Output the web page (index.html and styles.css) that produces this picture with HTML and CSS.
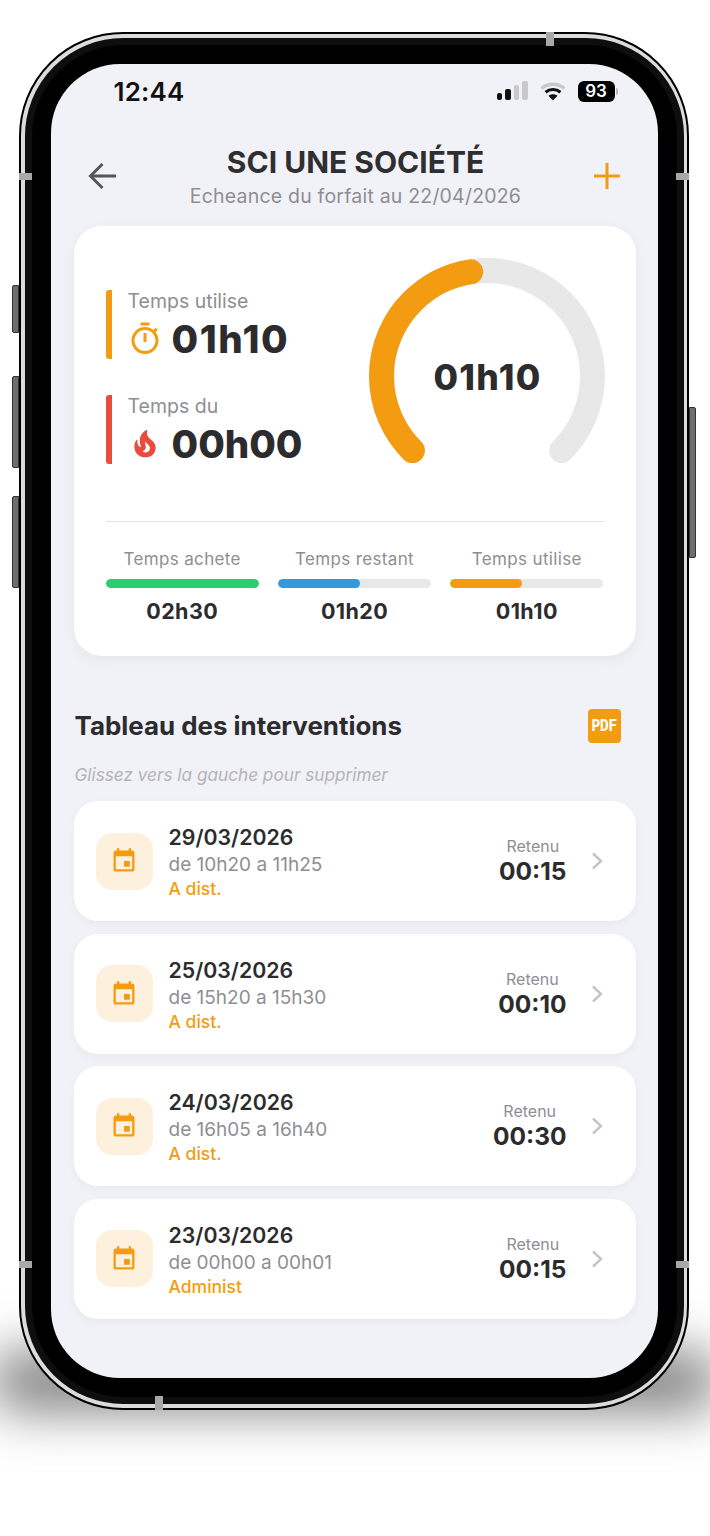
FILE: index.html
```html
<!doctype html>
<html lang="fr">
 <head>
	<meta charset="UTF-8">
	<title>SCI UNE SOCIÉTÉ</title>
	<link rel="stylesheet" href="styles.css">
 </head>
 <body>
	<div class="floor_shadow"></div>
	<div class="phone">
		<i class="side_btn btn_a"></i>
		<i class="side_btn btn_b"></i>
		<i class="side_btn btn_c"></i>
		<i class="side_btn btn_d"></i>
		<i class="band band_top"></i>
		<i class="band band_bottom"></i>
		<i class="band band_l1"></i>
		<i class="band band_r1"></i>
		<i class="band band_l2"></i>
		<i class="band band_r2"></i>
		<div class="ring">
			<div class="bezel">
				<div class="screen">
					<!-- barre de statut -->
					<div class="status">
						<span class="clock">12:44</span>
						<div class="status_icons">
							<div class="signal"><i class="on s1"></i><i class="on s2"></i><i class="s3"></i><i class="s4"></i></div>
							<svg class="wifi" width="26" height="19" viewBox="0 0 26 19">
								<path d="M1.5 6.5C7.8 .8 18.2 .8 24.5 6.5" fill="none" stroke="#c9c9cc" stroke-width="3.4"/>
								<path d="M5.6 10.2c4.2-3.6 10.6-3.6 14.8 0" fill="none" stroke="#111" stroke-width="3.2"/>
								<path d="M13 18.5l-4.5-4.8c2.6-2 6.4-2 9 0z" fill="#111"/>
							</svg>
							<div class="battery"><span class="batt_body">93</span><i class="batt_tip"></i></div>
						</div>
					</div>
					<!-- en-tete -->
					<header class="top">
						<svg class="top_icon" width="30" height="28" viewBox="0 0 30 28">
							<path d="M28 14H3M14.500 2L2.500 14l12 12" fill="none" stroke="#555558" stroke-width="3"/>
						</svg>
						<div class="top_text">
							<h1>SCI UNE SOCIÉTÉ</h1>
							<p>Echeance du forfait au 22/04/2026</p>
						</div>
						<svg class="top_icon" width="28" height="28" viewBox="0 0 28 28">
							<path d="M14 1v26M1 14h26" fill="none" stroke="#f39c12" stroke-width="3"/>
						</svg>
					</header>
					<!-- carte des temps -->
					<section class="card">
						<div class="card_top">
							<div class="stats">
								<div class="stat stat_used">
									<div class="stat_label">Temps utilise</div>
									<div class="stat_value">
										<svg class="stat_icon" width="36" height="36" viewBox="0 0 24 24"><path fill="#f39c12" d="M15 1H9v2h6V1zm-4 13h2V8h-2v6zm8.030-6.610l1.420-1.420c-.43-.51-.9-.99-1.410-1.410l-1.420 1.420C16.070 4.740 14.120 4 12 4c-4.970 0-9 4.030-9 9s4.020 9 9 9 9-4.030 9-9c0-2.120-.74-4.070-1.970-5.610zM12 20c-3.870 0-7-3.130-7-7s3.130-7 7-7 7 3.130 7 7-3.130 7-7 7z"/></svg>
										01h10
									</div>
								</div>
								<div class="stat stat_due">
									<div class="stat_label">Temps du</div>
									<div class="stat_value">
										<svg class="flame_icon" width="32" height="32" viewBox="0 0 24 24"><path fill="#e74c3c" d="M19.480 12.350c-1.570-4.080-7.160-4.300-5.810-10.230.1-.44-.37-.78-.75-.55C9.290 3.710 6.680 8 8.870 13.620c.18.46-.36.89-.75.59-1.810-1.370-2-3.340-1.840-4.750.06-.52-.62-.77-.91-.34C4.690 10.160 4 11.840 4 14.370c.38 5.600 5.110 7.320 6.810 7.540 2.430.31 5.060-.14 6.950-1.870 2.080-1.930 2.840-5.010 1.720-7.690zm-9.280 5.030c1.440-.35 2.180-1.390 2.380-2.310.33-1.430-.96-2.830-.09-5.090.33 1.870 3.270 3.040 3.270 5.080.08 2.530-2.660 4.700-5.560 2.320z"/></svg>
										00h00
									</div>
								</div>
							</div>
							<div class="gauge">
								<svg width="236" height="236" viewBox="0 0 236 236">
									<path d="M43.400 192.600A105.500 105.500 0 1 1 192.600 192.600" pathLength="100" fill="none" stroke="#e8e8e8" stroke-width="25" stroke-linecap="round"/>
									<path d="M43.400 192.600A105.500 105.500 0 1 1 192.600 192.600" pathLength="100" stroke-dasharray="46.700 100" fill="none" stroke="#f39c12" stroke-width="25" stroke-linecap="round"/>
								</svg>
								<span class="gauge_text">01h10</span>
							</div>
						</div>
						<div class="bars">
							<div class="bar_col">
								<div class="bar_label">Temps achete</div>
								<div class="track"><div class="fill green" style="width:100%"></div></div>
								<div class="bar_value">02h30</div>
							</div>
							<div class="bar_col">
								<div class="bar_label">Temps restant</div>
								<div class="track"><div class="fill blue" style="width:53.300%"></div></div>
								<div class="bar_value">01h20</div>
							</div>
							<div class="bar_col">
								<div class="bar_label">Temps utilise</div>
								<div class="track"><div class="fill orange" style="width:46.700%"></div></div>
								<div class="bar_value">01h10</div>
							</div>
						</div>
					</section>
					<!-- liste -->
					<div class="list_head">
						<h2>Tableau des interventions</h2>
						<span class="pdf">PDF</span>
					</div>
					<p class="hint">Glissez vers la gauche pour supprimer</p>
					<div class="rows">
						<div class="row">
							<div class="tile"><svg width="28" height="28" viewBox="0 0 24 24"><use href="#cal"/></svg></div>
							<div class="row_main">
								<div class="row_date">29/03/2026</div>
								<div class="row_time">de 10h20 a 11h25</div>
								<div class="row_tag">A dist.</div>
							</div>
							<div class="row_side"><span class="side_label">Retenu</span><span class="side_value">00:15</span></div>
							<svg class="chev" width="13" height="18" viewBox="0 0 13 18"><path d="M2 1.500L10 9l-8 7.500" fill="none" stroke="#c4c4c7" stroke-width="2.400"/></svg>
						</div>
						<div class="row">
							<div class="tile"><svg width="28" height="28" viewBox="0 0 24 24"><use href="#cal"/></svg></div>
							<div class="row_main">
								<div class="row_date">25/03/2026</div>
								<div class="row_time">de 15h20 a 15h30</div>
								<div class="row_tag">A dist.</div>
							</div>
							<div class="row_side"><span class="side_label">Retenu</span><span class="side_value">00:10</span></div>
							<svg class="chev" width="13" height="18" viewBox="0 0 13 18"><path d="M2 1.500L10 9l-8 7.500" fill="none" stroke="#c4c4c7" stroke-width="2.400"/></svg>
						</div>
						<div class="row">
							<div class="tile"><svg width="28" height="28" viewBox="0 0 24 24"><use href="#cal"/></svg></div>
							<div class="row_main">
								<div class="row_date">24/03/2026</div>
								<div class="row_time">de 16h05 a 16h40</div>
								<div class="row_tag">A dist.</div>
							</div>
							<div class="row_side"><span class="side_label">Retenu</span><span class="side_value">00:30</span></div>
							<svg class="chev" width="13" height="18" viewBox="0 0 13 18"><path d="M2 1.500L10 9l-8 7.500" fill="none" stroke="#c4c4c7" stroke-width="2.400"/></svg>
						</div>
						<div class="row">
							<div class="tile"><svg width="28" height="28" viewBox="0 0 24 24"><use href="#cal"/></svg></div>
							<div class="row_main">
								<div class="row_date">23/03/2026</div>
								<div class="row_time">de 00h00 a 00h01</div>
								<div class="row_tag">Administ</div>
							</div>
							<div class="row_side"><span class="side_label">Retenu</span><span class="side_value">00:15</span></div>
							<svg class="chev" width="13" height="18" viewBox="0 0 13 18"><path d="M2 1.500L10 9l-8 7.500" fill="none" stroke="#c4c4c7" stroke-width="2.400"/></svg>
						</div>
					</div>
				</div>
			</div>
		</div>
	</div>
	<svg class="defs" width="0" height="0"><defs>
		<path id="cal" fill="#f39c12" d="M17 12h-5v5h5v-5zM16 1v2H8V1H6v2H5c-1.110 0-1.990.9-1.990 2L3 19c0 1.100.89 2 2 2h14c1.100 0 2-.9 2-2V5c0-1.100-.9-2-2-2h-1V1h-2zm3 18H5V8h14v11z"/>
	</defs></svg>
 </body>
</html>
```

FILE: styles.css
```css
*{box-sizing:border-box}
html,body{margin:0;padding:0;background:#fff}
body{
	position:relative;
	width:710px;height:1536px;
	overflow:hidden;
	font-family:"Inter","Liberation Sans",sans-serif;
	color:#2c2c2e;
}
h1,h2,p{margin:0}
.defs{position:absolute}

/* ombre sous le telephone */
.floor_shadow{
	position:absolute;
	left:-10px;top:1352px;
	width:730px;height:58px;
	background:#7c7c7c;
	border-radius:40px;
	filter:blur(26px);
}

/* cadre du telephone */
.phone{
	position:relative;
	width:670px;height:1378px;
	margin:32px 0 0 19px;
}
.ring{
	height:100%;
	border:2px solid #000;
	border-radius:104px;
	background:#dcdcdc;
	padding:4px 3.500px;
}
.bezel{
	height:100%;
	background:#000;
	border:7px solid #0e0e0e;
	border-radius:98px;
	padding:19px;
}
.screen{
	height:100%;
	background:#f1f1f8;
	border-radius:69px;
	overflow:hidden;
}
.side_btn{
	position:absolute;
	width:7px;
	background:#6e6e6e;
	border:1px solid #333;
	border-radius:2px 0 0 2px;
}
.btn_a{left:-7px;top:253px;height:48px}
.btn_b{left:-7px;top:344px;height:92px}
.btn_c{left:-7px;top:464px;height:92px}
.btn_d{right:-7px;top:375px;height:151px;border-radius:0 2px 2px 0}
.band{position:absolute;background:#a8a8a8;z-index:2}
.band_top{left:527px;top:0;width:8px;height:14px}
.band_bottom{left:136px;bottom:0;width:8px;height:14px}
.band_l1{left:0;top:141px;width:13px;height:7px}
.band_r1{right:0;top:141px;width:13px;height:7px}
.band_l2{left:0;top:1229px;width:13px;height:7px}
.band_r2{right:0;top:1229px;width:13px;height:7px}

/* barre de statut */
.status{
	display:flex;
	justify-content:space-between;
	align-items:center;
	height:54px;
	padding:0 40px 0 63px;
}
.clock{font-size:26px;font-weight:600;color:#111;letter-spacing:.2px}
.status_icons{display:flex;align-items:center;gap:12px}
.signal{display:flex;align-items:flex-end;gap:2.900px;height:18px}
.signal i{width:5.500px;background:#c9c9cc;border-radius:2px}
.signal .on{background:#111}
.s1{height:7px}
.s2{height:11px}
.s3{height:15px}
.s4{height:19px}
.battery{display:flex;align-items:center;gap:1px}
.batt_body{
	width:37px;height:21px;
	background:#000;color:#fff;
	border-radius:6px;
	font-size:17px;font-weight:600;
	text-align:center;line-height:21px;
}
.batt_tip{width:2px;height:7px;background:#b9b9bb;border-radius:0 2px 2px 0}

/* en-tete */
.top{
	display:flex;
	justify-content:space-between;
	align-items:center;
	height:108px;
	padding:19px 36px 8px 37px;
}
.top_icon{margin-bottom:4px}
.top_text{text-align:center}
.top_text h1{font-size:30px;font-weight:700;line-height:36px;color:#2f2f31}
.top_text p{font-size:19.500px;line-height:32px;color:#8e8e93;letter-spacing:.2px}

/* carte */
.card{
	margin:0 22px 0 23px;
	height:430px;
	background:#fff;
	border-radius:28px;
	padding:32px 32px 0;
	box-shadow:0 4px 14px rgba(0,0,0,.05);
}
.card_top{
	display:flex;
	justify-content:space-between;
	height:264px;
	border-bottom:1px solid #e3e3e6;
}
.stats{display:flex;flex-direction:column;gap:36px;padding-top:32px}
.stat{height:69px;padding-left:16px;border-left:6px solid;border-radius:3px}
.stat_used{border-color:#f39c12}
.stat_due{border-color:#e74c3c}
.stat_label{font-size:19.500px;line-height:22px;color:#8e8e93}
.stat_value{
	display:flex;align-items:center;
	height:53px;
	font-size:38.500px;font-weight:800;color:#2c2c2e;
}
.stat_used .stat_value{letter-spacing:1.500px}
.stat_icon{margin:0 9px 0 -1px;flex:none}
.flame_icon{margin:0 11px 0 1px;flex:none}
.gauge{position:relative;width:236px;height:236px;margin-right:-1px}
.gauge_text{
	position:absolute;inset:0;
	display:flex;align-items:center;justify-content:center;
	font-size:35.500px;font-weight:800;letter-spacing:1.300px;
	padding:2px 0 0 2px;
}

/* trois barres */
.bars{display:flex;gap:19px;padding-top:26px}
.bar_col{flex:1;text-align:center}
.bar_label{font-size:17px;line-height:22px;color:#8e8e93;letter-spacing:.35px}
.track{height:9px;margin-top:9px;background:#e8e8e8;border-radius:5px;overflow:hidden}
.fill{height:100%;border-radius:5px}
.green{background:#2ecc71}
.blue{background:#3498db}
.orange{background:#f39c12}
.bar_value{margin-top:10px;font-size:21.500px;line-height:26px;font-weight:700;letter-spacing:.4px}

/* liste */
.list_head{
	display:flex;justify-content:space-between;align-items:center;
	margin-top:53px;
	padding:0 37px 0 24px;
}
.list_head h2{font-size:25.900px;font-weight:700;line-height:34px}
.pdf{
	width:33px;height:34px;
	background:#f39c12;color:#fff;
	border-radius:4px;
	font-family:"DejaVu Sans Mono","Liberation Mono",monospace;
	font-size:15px;font-weight:700;letter-spacing:-.6px;
	text-align:center;line-height:34px;
}
.hint{
	margin:22px 0 0 24px;
	font-size:17.200px;line-height:20px;font-style:italic;
	color:#b4b4b9;
}
.rows{display:flex;flex-direction:column;gap:12.670px;margin:16px 22px 0 23px}
.row{
	display:flex;align-items:center;
	height:120px;
	padding:0 32px 0 22px;
	background:#fff;
	border-radius:24px;
	box-shadow:0 3px 10px rgba(0,0,0,.04);
}
.tile{
	display:flex;align-items:center;justify-content:center;
	width:57px;height:57px;
	background:#fdf1de;
	border-radius:16px;
	flex:none;
}
.row_main{flex:1;margin-left:16px;padding-top:1px}
.row_date{font-size:21.300px;font-weight:600;line-height:29px}
.row_time{font-size:19px;line-height:26px;color:#8e8e93}
.row_tag{font-size:17.500px;font-weight:500;line-height:22px;color:#f39c12}
.row_side{display:flex;flex-direction:column;align-items:center;margin-right:24px}
.side_label{font-size:16px;line-height:21px;color:#8e8e93}
.side_value{font-size:24.500px;font-weight:700;line-height:29px}
.chev{flex:none}
```
